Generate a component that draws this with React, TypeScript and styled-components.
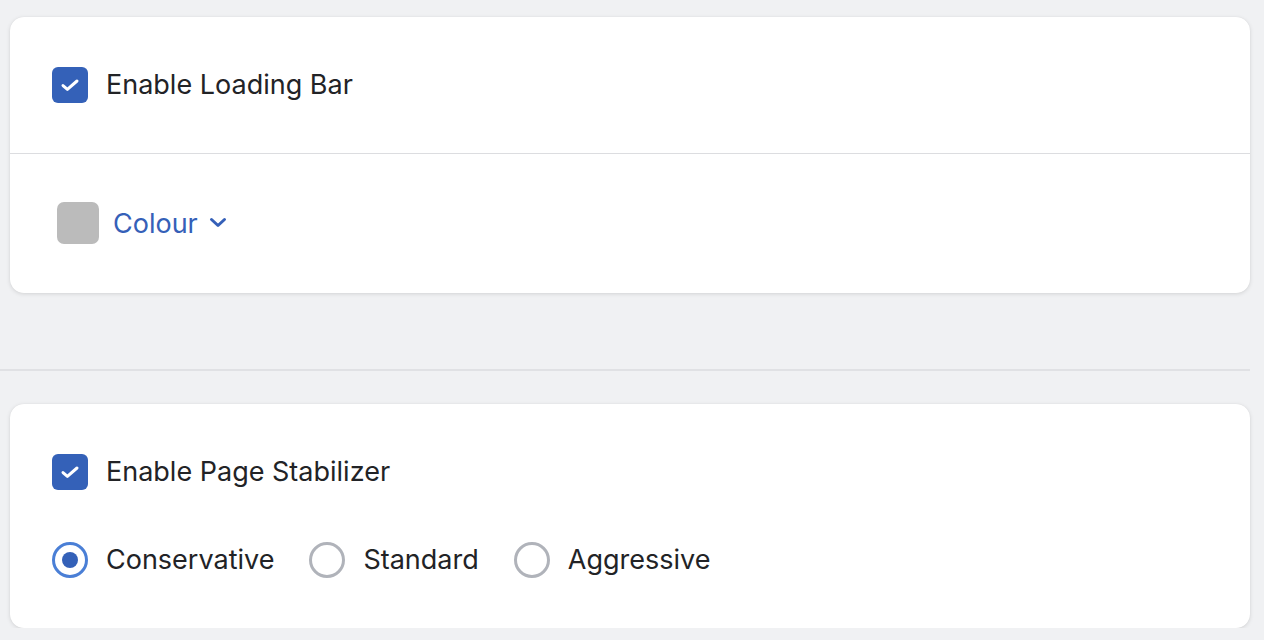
import React from "react";
import styled, { createGlobalStyle } from "styled-components";

const GlobalStyle = createGlobalStyle`
  html, body {
    margin: 0;
    padding: 0;
    background: #f0f1f3;
    font-family: Inter, "Noto Sans", sans-serif;
    color: #222326;
  }
`;

const Page = styled.div`
  padding: 17px 14px 0 0;
  display: flex;
  flex-direction: column;
`;

const Card = styled.div`
  margin-left: 10px;
  background: #fff;
  border-radius: 14px;
  box-shadow: 0 1px 4px rgba(0, 0, 0, 0.12), 0 0 1px rgba(0, 0, 0, 0.08);
  display: flex;
  flex-direction: column;
`;

const Section = styled.div<{ $top?: number; $bottom?: number; $left?: number }>`
  padding: ${(p) => p.$top ?? 50}px 42px ${(p) => p.$bottom ?? 50}px
    ${(p) => p.$left ?? 42}px;
  display: flex;
  flex-direction: column;
  gap: 52px;
`;

const CardDivider = styled.div`
  height: 1px;
  background: #dcdde0;
`;

const PageDivider = styled.div`
  height: 2px;
  background: #e0e1e4;
  margin: 76px 0 33px;
`;

const Row = styled.label`
  display: flex;
  align-items: center;
  gap: 18px;
  font-size: 27px;
  line-height: 36px;
  cursor: pointer;
`;

const Box = styled.span`
  width: 36px;
  height: 36px;
  border-radius: 6px;
  background: #3461b8;
  display: flex;
  align-items: center;
  justify-content: center;
  flex-shrink: 0;
`;

const Swatch = styled.span`
  width: 42px;
  height: 42px;
  border-radius: 7px;
  background: #bbbbbb;
`;

const ColourButton = styled.span`
  display: flex;
  align-items: center;
  gap: 11px;
  color: #3560b8;
  font-size: 27px;
`;

const SwatchRow = styled.div`
  display: flex;
  align-items: center;
  gap: 14px;
`;

const RadioGroup = styled.div`
  display: flex;
  align-items: center;
  gap: 35px;
`;

const RadioCircle = styled.span<{ $on?: boolean }>`
  width: 36px;
  height: 36px;
  box-sizing: border-box;
  border-radius: 50%;
  border: 3px solid ${(p) => (p.$on ? "#4a7fd6" : "#b0b3ba")};
  display: flex;
  align-items: center;
  justify-content: center;
  &::after {
    content: "";
    width: 16px;
    height: 16px;
    border-radius: 50%;
    background: ${(p) => (p.$on ? "#3461b8" : "transparent")};
  }
`;

const Check = () => (
  <svg width="22" height="22" viewBox="0 0 22 22">
    <path
      d="M4 11.6l4.4 3.8L18 7"
      fill="none"
      stroke="#fff"
      strokeWidth="3"
      strokeLinecap="round"
      strokeLinejoin="round"
    />
  </svg>
);

const Chevron = () => (
  <svg width="18" height="12" viewBox="0 0 18 12">
    <path
      d="M2.5 2.5l6.5 6L15.5 2.5"
      fill="none"
      stroke="#3560b8"
      strokeWidth="3"
      strokeLinecap="round"
      strokeLinejoin="round"
    />
  </svg>
);

const modes = ["Conservative", "Standard", "Aggressive"];

export default function App() {
  return (
    <Page>
      <GlobalStyle />
      <Card>
        <Section>
          <Row>
            <Box>
              <Check />
            </Box>
            Enable Loading Bar
          </Row>
        </Section>
        <CardDivider />
        <Section $top={48} $bottom={49} $left={47}>
          <SwatchRow>
            <Swatch />
            <ColourButton>
              Colour
              <Chevron />
            </ColourButton>
          </SwatchRow>
        </Section>
      </Card>
      <PageDivider />
      <Card>
        <Section>
          <Row>
            <Box>
              <Check />
            </Box>
            Enable Page Stabilizer
          </Row>
          <RadioGroup>
            {modes.map((m, i) => (
              <Row key={m}>
                <RadioCircle $on={i === 0} />
                {m}
              </Row>
            ))}
          </RadioGroup>
        </Section>
      </Card>
    </Page>
  );
}
